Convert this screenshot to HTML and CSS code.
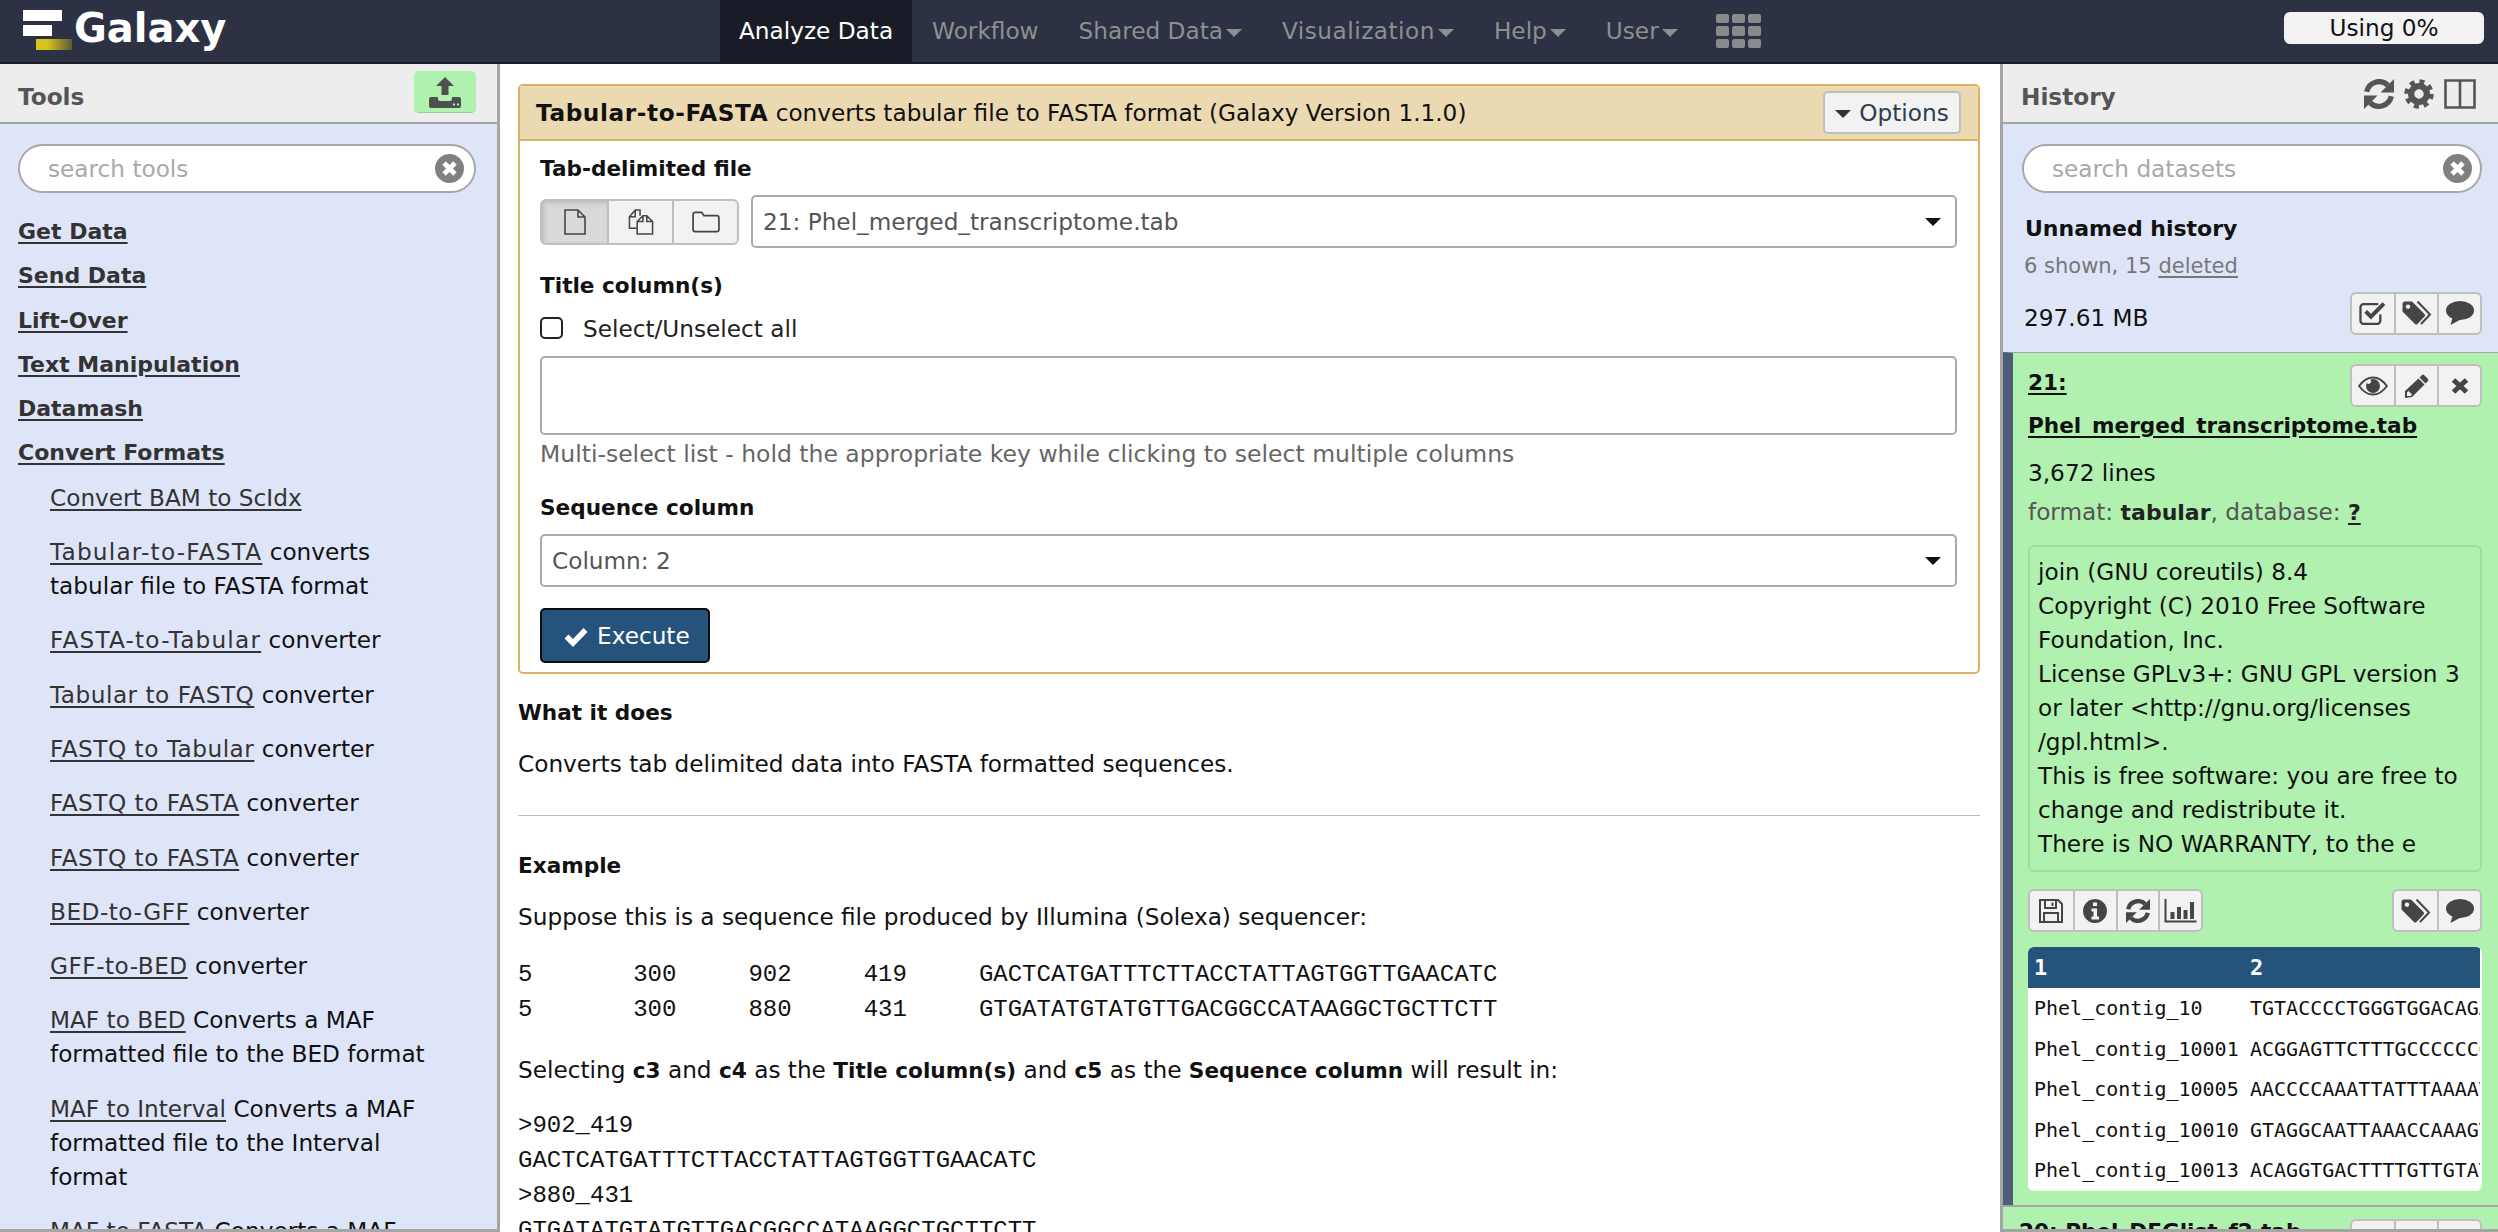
FILE: index.html
```html
<!DOCTYPE html>
<html lang="en">
<head>
    <meta charset="UTF-8">
    <title>Galaxy</title>
    <link rel="stylesheet" href="styles.css">
</head>
<body>
    <!-- icon sprite -->
    <svg class="sprite" xmlns="http://www.w3.org/2000/svg">
        <symbol id="i-file" viewBox="0 0 24 26"><path d="M2 1h13l7 7v17H2z M15 1v7h7" fill="none" stroke="currentColor" stroke-width="1.6"/></symbol>
        <symbol id="i-files" viewBox="0 0 26 27"><path d="M9 20H1V8L7 1h5v6M7 1v7H1" fill="none" stroke="currentColor" stroke-width="1.6"/><path d="M9 26V13l6-6h4l6 6v13zM15 7v6H9M19 7v6h6" fill="none" stroke="currentColor" stroke-width="1.6"/></symbol>
        <symbol id="i-folder" viewBox="0 0 26 20"><path d="M1 3a2 2 0 0 1 2-2h6l2 3h12a2 2 0 0 1 2 2v11a2 2 0 0 1-2 2H3a2 2 0 0 1-2-2z" fill="none" stroke="currentColor" stroke-width="1.6"/></symbol>
        <symbol id="i-refresh" viewBox="2 2 20 20"><path d="M3.8 10.5A8.5 8.5 0 0 1 18 6.2M20.2 13.5A8.5 8.5 0 0 1 6 17.8" fill="none" stroke="currentColor" stroke-width="3.6"/><path d="M22 2v9h-9zM2 22v-9h9z" fill="currentColor"/></symbol>
        <symbol id="i-cog" viewBox="0 0 24 24"><circle cx="12" cy="12" r="6.3" fill="none" stroke="currentColor" stroke-width="5"/><circle cx="12" cy="12" r="9.8" fill="none" stroke="currentColor" stroke-width="4" stroke-dasharray="3.9 3.8"/></symbol>
        <symbol id="i-columns" viewBox="0 0 32 30"><path d="M1.5 1.5h29v27h-29zM16 1.5v27" fill="none" stroke="currentColor" stroke-width="2.6"/></symbol>
        <symbol id="i-check-square" viewBox="0 0 26 23"><path d="M20 13v6a3 3 0 0 1-3 3H4a3 3 0 0 1-3-3V6a3 3 0 0 1 3-3h14" fill="none" stroke="currentColor" stroke-width="2.2"/><path d="M6 10l5 5L23.5 2.5" fill="none" stroke="currentColor" stroke-width="3.8"/></symbol>
        <symbol id="i-tags" viewBox="0 0 29 24"><path fill-rule="evenodd" d="M0 3a2.5 2.5 0 0 1 2.5-2.5h7L22 13a2 2 0 0 1 0 2.5L15 23a2 2 0 0 1-2.5 0L0 10.500zM5.5 3.5a2.2 2.2 0 1 0 .01 0z" fill="currentColor"/><path d="M15 .5l12.5 13-9 9.5" fill="none" stroke="currentColor" stroke-width="2"/></symbol>
        <symbol id="i-comment" viewBox="0 0 28 24"><ellipse cx="14" cy="9.5" rx="14" ry="9.5" fill="currentColor"/><path d="M7 15l-2.500 9 11-6z" fill="currentColor"/></symbol>
        <symbol id="i-eye" viewBox="0 0 28 18"><path d="M1 9C5 3.5 9 1 14 1s9 2.500 13 8c-4 5.500-8 8-13 8S5 14.500 1 9z" fill="none" stroke="currentColor" stroke-width="1.8"/><path d="M14 2.500a6.500 6.500 0 1 1-6.500 6.500c0-1 .2-2 .7-2.900a2.200 2.200 0 1 0 3.200-3c.8-.4 1.700-.6 2.600-.6z" fill="currentColor"/></symbol>
        <symbol id="i-pencil" viewBox="0 0 24 24"><path d="M17 1a1.500 1.500 0 0 1 2 0l4 4a1.500 1.500 0 0 1 0 2l-2.500 2.500-6-6zM13.500 4.500l6 6L7 23l-7 1v-7zM3.500 17l-1.500 1.500v3.500h3.500L7 20.500z" fill="currentColor" fill-rule="evenodd"/></symbol>
        <symbol id="i-times" viewBox="0 0 30 24"><path d="M8.5 6l13 12M21.500 6l-13 12" fill="none" stroke="currentColor" stroke-width="5"/></symbol>
        <symbol id="i-save" viewBox="0 0 24 24"><path d="M1 1h18l4 4v18H1z M6 1v8h11V1 M5 23v-9h14v9 M13.500 3.500v3.500" fill="none" stroke="currentColor" stroke-width="2"/></symbol>
        <symbol id="i-info" viewBox="0 0 24 24"><path fill-rule="evenodd" d="M12 0a12 12 0 1 0 .01 0zM10 3.500h4v3.500h-4zM8.500 9.500H14v8h2v3H8.500v-3h2v-5h-2z" fill="currentColor"/></symbol>
        <symbol id="i-chart" viewBox="0 0 32 24"><path d="M1 0v22.500H32" fill="none" stroke="currentColor" stroke-width="2"/><path d="M6 13h4v7H6zM12.500 8h4v12h-4zM19 11h4v9h-4zM25.500 3h4v17h-4z" fill="currentColor"/></symbol>
        <symbol id="i-upload" viewBox="0 0 32 32"><path d="M16 1l9 9h-5.500v9h-7v-9H7z" fill="currentColor"/><path fill-rule="evenodd" d="M2 21h7v2a2 2 0 0 0 2 2h10a2 2 0 0 0 2-2v-2h7a2 2 0 0 1 2 2v7a2 2 0 0 1-2 2H2a2 2 0 0 1-2-2v-7a2 2 0 0 1 2-2zM24 27.500h2v2h-2zM28 27.500h2v2h-2z" fill="currentColor"/></symbol>
        <symbol id="i-check" viewBox="0 0 24 24"><path d="M2.500 12.500l6.500 6.500L21.500 6" fill="none" stroke="currentColor" stroke-width="5.500"/></symbol>
        <symbol id="i-clear" viewBox="0 0 24 24"><circle cx="12" cy="12" r="12" fill="currentColor"/><path d="M7.500 7.500l9 9M16.500 7.500l-9 9" fill="none" stroke="#fff" stroke-width="4"/></symbol>
    </svg>

    <header class="masthead">
        <a class="brand">
            <span class="logo"><i class="bar-a"></i><i class="bar-b"></i><i class="bar-c"></i></span>
            <span class="brand-name">Galaxy</span>
        </a>
        <nav class="nav">
            <a class="nav-item active">Analyze Data</a>
            <a class="nav-item">Workflow</a>
            <a class="nav-item caret">Shared Data</a>
            <a class="nav-item caret loose">Visualization</a>
            <a class="nav-item caret">Help</a>
            <a class="nav-item caret">User</a>
            <a class="nav-item apps">
                <i></i><i></i><i></i><i></i><i></i><i></i><i></i><i></i><i></i>
            </a>
        </nav>
        <div class="quota">Using 0%</div>
    </header>

    <div class="layout">
        <aside class="panel tools">
            <div class="panel-head">
                <span class="panel-title">Tools</span>
                <a class="upload"><svg class="ico-upload"><use href="#i-upload"/></svg></a>
            </div>
            <div class="panel-body">
                <div class="search">
                    <span class="placeholder">search tools</span>
                    <svg class="clear"><use href="#i-clear"/></svg>
                </div>
                <ul class="sections">
                    <li><a>Get Data</a></li>
                    <li><a>Send Data</a></li>
                    <li><a>Lift-Over</a></li>
                    <li><a>Text Manipulation</a></li>
                    <li><a>Datamash</a></li>
                    <li><a>Convert Formats</a></li>
                </ul>
                <ul class="tool-list">
                    <li><a>Convert BAM to ScIdx</a></li>
                    <li><a class="hy">Tabular-to-FASTA</a> converts<br>tabular file to FASTA format</li>
                    <li><a class="hy">FASTA-to-Tabular</a> converter</li>
                    <li><a class="caps">Tabular to FASTQ</a> converter</li>
                    <li><a class="caps">FASTQ to Tabular</a> converter</li>
                    <li><a class="caps">FASTQ to FASTA</a> converter</li>
                    <li><a class="caps">FASTQ to FASTA</a> converter</li>
                    <li><a class="caps">BED-to-GFF</a> converter</li>
                    <li><a class="caps">GFF-to-BED</a> converter</li>
                    <li><a>MAF to BED</a> Converts a MAF<br>formatted file to the BED format</li>
                    <li><a>MAF to Interval</a> Converts a MAF<br>formatted file to the Interval<br>format</li>
                    <li><a>MAF to FASTA</a> Converts a MAF</li>
                </ul>
            </div>
        </aside>

        <main class="center">
            <section class="form-card">
                <div class="form-head">
                    <div><b>Tabular-to-FASTA</b> converts tabular file to FASTA format (Galaxy Version 1.1.0)</div>
                    <a class="btn-options"><i class="tri"></i>Options</a>
                </div>
                <div class="form-body">
                    <label class="field-label">Tab-delimited file</label>
                    <div class="select-row">
                        <div class="btn-group">
                            <a class="on"><svg class="ico"><use href="#i-file"/></svg></a>
                            <a><svg class="ico"><use href="#i-files"/></svg></a>
                            <a><svg class="ico"><use href="#i-folder"/></svg></a>
                        </div>
                        <div class="select">21: Phel_merged_transcriptome.tab<i class="tri-big"></i></div>
                    </div>
                    <label class="field-label second">Title column(s)</label>
                    <div class="check-row"><i class="checkbox"></i>Select/Unselect all</div>
                    <div class="multi"></div>
                    <div class="help">Multi-select list - hold the appropriate key while clicking to select multiple columns</div>
                    <label class="field-label third">Sequence column</label>
                    <div class="select">Column: 2<i class="tri-big"></i></div>
                    <a class="btn-execute"><svg class="ico-check"><use href="#i-check"/></svg>Execute</a>
                </div>
            </section>

            <div class="help-text">
                <p class="strong first">What it does</p>
                <p>Converts tab delimited data into FASTA formatted sequences.</p>
                <hr>
                <p class="strong example">Example</p>
                <p>Suppose this is a sequence file produced by Illumina (Solexa) sequencer:</p>
                <pre>5	300	902	419	GACTCATGATTTCTTACCTATTAGTGGTTGAACATC
5	300	880	431	GTGATATGTATGTTGACGGCCATAAGGCTGCTTCTT</pre>
                <p class="result">Selecting <b>c3</b> and <b>c4</b> as the <b>Title column(s)</b> and <b>c5</b> as the <b>Sequence column</b> will result in:</p>
                <pre class="fasta">&gt;902_419
GACTCATGATTTCTTACCTATTAGTGGTTGAACATC
&gt;880_431
GTGATATGTATGTTGACGGCCATAAGGCTGCTTCTT</pre>
            </div>
        </main>

        <aside class="panel history">
            <div class="panel-head">
                <span class="panel-title">History</span>
                <div class="head-icons">
                    <svg class="head-ico"><use href="#i-refresh"/></svg>
                    <svg class="head-ico"><use href="#i-cog"/></svg>
                    <svg class="head-ico wide"><use href="#i-columns"/></svg>
                </div>
            </div>
            <div class="panel-body">
                <div class="search">
                    <span class="placeholder">search datasets</span>
                    <svg class="clear"><use href="#i-clear"/></svg>
                </div>
                <div class="hist-name">Unnamed history</div>
                <div class="hist-count">6 shown, 15 <a>deleted</a></div>
                <div class="hist-size">
                    <span>297.61 MB</span>
                    <div class="btn-group small">
                        <a><svg class="ico"><use href="#i-check-square"/></svg></a>
                        <a><svg class="ico"><use href="#i-tags"/></svg></a>
                        <a><svg class="ico"><use href="#i-comment"/></svg></a>
                    </div>
                </div>
                <article class="dataset">
                    <div class="dataset-title">
                        <a class="dataset-name">21:<br>Phel_merged_transcriptome.tab</a>
                        <div class="btn-group small floated">
                            <a><svg class="ico"><use href="#i-eye"/></svg></a>
                            <a><svg class="ico"><use href="#i-pencil"/></svg></a>
                            <a><svg class="ico"><use href="#i-times"/></svg></a>
                        </div>
                    </div>
                    <div class="lines">3,672 lines</div>
                    <div class="format">format: <b>tabular</b>, database: <a>?</a></div>
                    <div class="info-box">join (GNU coreutils) 8.4<br>Copyright (C) 2010 Free Software<br>Foundation, Inc.<br>License GPLv3+: GNU GPL version 3<br>or later &lt;http://gnu.org/licenses<br>/gpl.html&gt;.<br>This is free software: you are free to<br>change and redistribute it.<br>There is NO WARRANTY, to the e</div>
                    <div class="dataset-actions">
                        <div class="btn-group small">
                            <a><svg class="ico"><use href="#i-save"/></svg></a>
                            <a><svg class="ico"><use href="#i-info"/></svg></a>
                            <a><svg class="ico"><use href="#i-refresh"/></svg></a>
                            <a><svg class="ico wide"><use href="#i-chart"/></svg></a>
                        </div>
                        <div class="btn-group small">
                            <a><svg class="ico"><use href="#i-tags"/></svg></a>
                            <a><svg class="ico"><use href="#i-comment"/></svg></a>
                        </div>
                    </div>
                    <div class="peek">
                        <table>
                            <tr><th>1</th><th>2</th></tr>
                            <tr><td>Phel_contig_10</td><td>TGTACCCCTGGGTGGACAGACCTTA</td></tr>
                            <tr><td>Phel_contig_10001</td><td>ACGGAGTTCTTTGCCCCCCGATTCA</td></tr>
                            <tr><td>Phel_contig_10005</td><td>AACCCCAAATTATTTAAAATGCTTA</td></tr>
                            <tr><td>Phel_contig_10010</td><td>GTAGGCAATTAAACCAAAGTTCAGA</td></tr>
                            <tr><td>Phel_contig_10013</td><td>ACAGGTGACTTTTGTTGTATCCAGT</td></tr>
                        </table>
                    </div>
                </article>
                <article class="dataset-next">
                    <a>20: Phel_DEGlist_f2.tab</a>
                    <div class="btn-group small">
                        <a><svg class="ico"><use href="#i-eye"/></svg></a>
                        <a><svg class="ico"><use href="#i-pencil"/></svg></a>
                        <a><svg class="ico"><use href="#i-times"/></svg></a>
                    </div>
                </article>
            </div>
        </aside>
    </div>
</body>
</html>
```

FILE: styles.css
```css
* {
    box-sizing: border-box;
}

html, body {
    height: 100%;
}

body {
    margin: 0;
    overflow: hidden;
    background: #fff;
    color: #111;
    font-family: "DejaVu Sans", sans-serif;
    font-size: 23.2px;
    line-height: 34px;
}

a {
    color: inherit;
}

.sprite {
    display: none;
}

/* masthead */
.masthead {
    display: flex;
    align-items: flex-start;
    height: 64px;
    background: #2c3143;
    border-bottom: 2px solid #191b25;
    position: relative;
}

.brand {
    display: flex;
    align-items: center;
    width: 720px;
    height: 62px;
    padding-left: 23px;
    color: #fff;
}

.logo {
    display: block;
    width: 51px;
    height: 42px;
    position: relative;
    filter: blur(0.6px);
}

.logo i {
    position: absolute;
    display: block;
    height: 11px;
}

.bar-a {
    left: 0;
    top: 0;
    width: 39px;
    background: #fff;
}

.bar-b {
    left: 0;
    top: 15px;
    width: 29px;
    background: #fff;
}

.bar-c {
    left: 13px;
    top: 29px;
    width: 36px;
    background: linear-gradient(to right, #d9c41c 30%, #5c5a38);
}

.brand-name {
    font-size: 40px;
    font-weight: bold;
    line-height: 50px;
    margin-top: -6px;
}

.nav {
    display: flex;
    height: 62px;
}

.nav-item {
    display: flex;
    align-items: center;
    padding: 0 20px;
    color: #8f8f8f;
}

.nav-item.active {
    background: #191c26;
    color: #fff;
    padding: 0 19px;
}

.nav-item.loose {
    letter-spacing: 0.5px;
}

.nav-item.caret::after {
    content: "";
    margin-left: 3px;
    margin-top: 4px;
    border-left: 8px solid transparent;
    border-right: 8px solid transparent;
    border-top: 8px solid #8f8f8f;
}

.apps {
    display: grid;
    grid-template-columns: repeat(3, 13px);
    grid-auto-rows: 9.5px;
    gap: 3px;
    align-items: stretch;
    align-content: center;
    padding: 0 0 0 18px;
}

.apps i {
    background: #8a8a8a;
    border-radius: 2px;
}

.quota {
    position: absolute;
    top: 12px;
    right: 14px;
    width: 200px;
    height: 32px;
    background: #f3f3f3;
    border-radius: 6px;
    color: #111;
    text-align: center;
    line-height: 32px;
}

/* three columns */
.layout {
    display: flex;
    height: 1168px;
}

.panel {
    flex: none;
    display: flex;
    flex-direction: column;
    height: 100%;
    overflow: hidden;
    background: #dfe5f9;
    border-bottom: 3px solid #a5a5a5;
}

.tools {
    width: 500px;
    border-right: 3px solid #a5a5a5;
}

.history {
    width: 498px;
    border-left: 3px solid #a5a5a5;
}

.panel-head {
    flex: none;
    display: flex;
    align-items: center;
    justify-content: space-between;
    height: 60px;
    padding: 0 18px;
    background: #ededed;
    border-bottom: 2px solid #a5a5a5;
}

.panel-title {
    color: #555;
    font-weight: bold;
    margin-top: 8px;
}

.upload {
    display: flex;
    align-items: center;
    justify-content: center;
    width: 62px;
    height: 42px;
    margin-top: -2px;
    margin-right: 3px;
    background: #aff2af;
    border-bottom: 1px solid #8fd48f;
    border-radius: 5px;
    color: #4f4f4f;
}

.ico-upload {
    width: 32px;
    height: 32px;
}

.panel-body {
    flex: 1;
    min-height: 0;
}

.search {
    display: flex;
    align-items: center;
    justify-content: space-between;
    height: 49px;
    margin: 20px 21px 0 18px;
    padding: 0 10px 0 28px;
    background: #fff;
    border: 2px solid #a8a8a8;
    border-radius: 25px;
}

.placeholder {
    color: #a9a9a9;
}

.clear {
    width: 29px;
    height: 29px;
    color: #808080;
}

/* tool menu */
.sections {
    list-style: none;
    margin: 17px 0 0;
    padding: 0 0 0 18px;
}

.sections li {
    height: 44.3px;
    line-height: 44px;
    font-size: 22px;
    font-weight: bold;
    color: #333;
}

.sections a,
.tool-list a,
.dataset-name,
.dataset-next a,
.format a {
    text-decoration: underline;
    text-underline-offset: 3px;
}

.tool-list {
    list-style: none;
    margin: 5px 0 0;
    padding: 0 0 0 50px;
}

.tool-list li {
    margin-bottom: 20.3px;
    white-space: nowrap;
    color: #111;
}

.tool-list a {
    color: #333;
}

/* wide hyphens and capitals of the original face */
.tool-list a.hy {
    letter-spacing: 1.2px;
}

.tool-list a.caps {
    letter-spacing: 0.5px;
}

/* center */
.center {
    flex: 1;
    min-width: 0;
    height: 100%;
    overflow: hidden;
    padding: 20px 20px 0 18px;
}

.form-card {
    border: 2px solid #d8b365;
    border-radius: 5px;
}

.form-head {
    display: flex;
    align-items: center;
    justify-content: space-between;
    height: 55px;
    padding: 0 17px 0 16px;
    background: #ebd9b2;
    border-bottom: 2px solid #d8b365;
    white-space: nowrap;
    color: #111;
    font-size: 23.2px;
}

.form-head b {
    letter-spacing: 0.6px;
}

.btn-options {
    display: flex;
    align-items: center;
    justify-content: center;
    width: 138px;
    height: 43px;
    background: #f2f2f2;
    border: 2px solid #bfbfbf;
    border-radius: 5px;
    color: #2c3e50;
}

.tri {
    margin-right: 8px;
    margin-top: 2px;
    border-left: 8px solid transparent;
    border-right: 8px solid transparent;
    border-top: 8px solid #333;
}

.form-body {
    padding: 11px 21px 9px 20px;
}

.field-label {
    display: block;
    height: 34px;
    font-size: 21.6px;
    font-weight: bold;
    color: #111;
}

.field-label.second {
    margin-top: 21px;
}

.field-label.third {
    margin-top: 20px;
    margin-bottom: 9px;
}

.select-row {
    display: flex;
    align-items: center;
    gap: 12px;
    margin-top: 9px;
}

.select {
    flex: 1;
    display: flex;
    align-items: center;
    justify-content: space-between;
    height: 53px;
    padding: 0 10px;
    background: #fff;
    border: 2px solid #aaa;
    border-radius: 5px;
    color: #555;
}

.tri-big {
    margin-right: 4px;
    border-left: 8px solid transparent;
    border-right: 8px solid transparent;
    border-top: 8px solid #111;
}

.btn-group {
    flex: none;
    display: flex;
    height: 46px;
    background: #f2f2f2;
    border: 2px solid #bfbfbf;
    border-radius: 6px;
    color: #454545;
}

.btn-group a {
    display: flex;
    align-items: center;
    justify-content: center;
    width: 65px;
    border-left: 2px solid #bfbfbf;
}

.btn-group a:first-child {
    border-left: 0;
}

.btn-group a.on {
    background: #d9d9d9;
    box-shadow: inset 2px 2px 4px #bbb;
}

.btn-group .ico {
    width: 28px;
    height: 26px;
}

.btn-group.small {
    height: 43px;
}

.btn-group.small a {
    width: 42.8px;
}

.btn-group.small .ico {
    width: 30px;
    height: 24px;
}

.btn-group.small .ico.wide {
    width: 33px;
}

.check-row {
    display: flex;
    align-items: center;
    height: 34px;
    margin-top: 9px;
    color: #222;
}

.checkbox {
    width: 23px;
    height: 22px;
    margin-right: 20px;
    margin-top: -2px;
    background: #fff;
    border: 2px solid #222;
    border-radius: 5px;
}

.multi {
    height: 79px;
    margin-top: 10px;
    border: 2px solid #aaa;
    border-radius: 5px;
}

.help {
    margin-top: 2px;
    color: #666;
    white-space: nowrap;
    font-size: 23.5px;
}

.btn-execute {
    display: flex;
    align-items: center;
    width: 170px;
    height: 55px;
    margin-top: 21px;
    padding-left: 22px;
    background: #25537b;
    border: 2px solid #0c0c0c;
    border-radius: 5px;
    color: #fff;
}

.ico-check {
    width: 24px;
    height: 24px;
    margin-right: 9px;
}

/* help text under the form */
.help-text p {
    margin: 17px 0 0;
    height: 34px;
    color: #111;
    white-space: nowrap;
}

.help-text p b {
    font-size: 21.6px;
}

.help-text p.strong {
    font-size: 21.6px;
    font-weight: bold;
}

.help-text p.first {
    margin-top: 22px;
}

.help-text p.example {
    margin-top: 33px;
}

.help-text p.result {
    margin-top: 26px;
}

.help-text hr {
    border: 0;
    border-top: 1px solid #bbb;
    margin: 34px 0 1px;
}

.help-text pre {
    margin: 24px 0 0;
    font-family: "Liberation Mono", monospace;
    font-size: 24px;
    line-height: 34.7px;
    tab-size: 8;
}

.help-text pre.fasta {
    margin-top: 22px;
}

/* history */
.history .search {
    margin: 20px 16px 0 19px;
    padding-right: 8px;
}

.head-icons {
    display: flex;
    gap: 10px;
    margin-top: 1px;
    margin-right: 4px;
    color: #555;
}

.head-ico {
    width: 30px;
    height: 30px;
}

.head-ico.wide {
    width: 32px;
}

.hist-name {
    margin: 19px 0 0 22px;
    font-size: 22px;
    font-weight: bold;
    color: #111;
}

.hist-count {
    margin: 3px 0 0 21px;
    font-size: 21px;
    color: #777;
}

.hist-count a {
    text-decoration: underline;
    text-underline-offset: 3px;
}

.hist-size {
    display: flex;
    align-items: center;
    justify-content: space-between;
    margin: 8px 16px 0 21px;
}

.hist-size span {
    margin-top: 10px;
}

.dataset {
    margin-top: 17px;
    padding: 8px 16px 12px 15px;
    height: 853px;
    background: #b0f1b0;
    border-top: 1px solid #a5a5a5;
    border-left: 10px solid #4f5b7b;
}

.dataset-title {
    position: relative;
    height: 86px;
}

.dataset-name {
    display: block;
    color: #111;
    font-size: 21.6px;
    font-weight: bold;
    line-height: 43px;
    white-space: nowrap;
}

.floated {
    position: absolute;
    top: 3px;
    right: 0;
}

.lines {
    margin-top: 9px;
}

.format {
    margin-top: 5px;
    color: #555;
}

.format b,
.format a {
    color: #222;
    font-size: 22px;
    font-weight: bold;
}

.info-box {
    height: 327px;
    margin-top: 15px;
    padding: 8px 8px;
    border: 2px solid #a0dca0;
    border-radius: 6px;
    white-space: nowrap;
    overflow: hidden;
}

.dataset-actions {
    display: flex;
    justify-content: space-between;
    margin-top: 17px;
}

.peek {
    margin-top: 15px;
    height: 244px;
    background: #fff;
    border-radius: 6px;
    overflow: hidden;
}

.peek table {
    width: 452px;
    table-layout: fixed;
    border-collapse: collapse;
    font-family: "DejaVu Sans Mono", monospace;
    font-size: 20px;
    white-space: nowrap;
}

.peek th {
    height: 41px;
    padding: 0 6px;
    background: #25537b;
    color: #fff;
    text-align: left;
    font-size: 22px;
}

.peek th:first-child,
.peek td:first-child {
    width: 216px;
}

.peek td {
    height: 40.5px;
    padding: 0 6px;
    overflow: hidden;
}

.dataset-next {
    display: flex;
    justify-content: space-between;
    height: 40px;
    padding: 8px 16px 0 16px;
    background: #b0f1b0;
    border-top: 2px solid #a5a5a5;
    font-size: 21.6px;
    font-weight: bold;
    white-space: nowrap;
}

.dataset-next .btn-group {
    margin-top: 4px;
}
```
